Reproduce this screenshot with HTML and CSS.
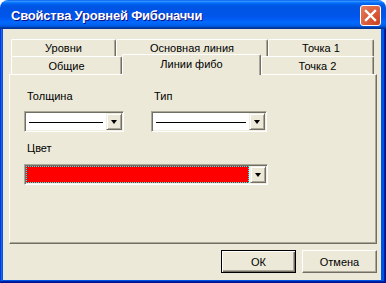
FILE: index.html
```html
<!DOCTYPE html>
<html lang="ru">
<head>
    <meta charset="UTF-8">
    <title>Свойства Уровней Фибоначчи</title>
    <link rel="stylesheet" href="styles.css">
</head>
<body>
    <div class="window">
        <div class="title-bar">
            <span class="title-text">Свойства Уровней Фибоначчи</span>
            <div class="close-btn">
                <svg width="21" height="21" viewBox="0 0 21 21">
                    <path d="M6 6 L15 15 M15 6 L6 15" stroke="#fff" stroke-width="2.4" stroke-linecap="square"/>
                </svg>
            </div>
        </div>
        <div class="frame">
            <div class="client">
                <div class="tab-strip">
                    <div class="tab-row">
                        <div class="tab" style="width: 105px">Уровни</div>
                        <div class="tab" style="width: 152px">Основная линия</div>
                        <div class="tab" style="width: 106px">Точка 1</div>
                    </div>
                    <div class="tab-row front">
                        <div class="tab" style="width: 111px">Общие</div>
                        <div class="tab selected" style="width: 139px">Линии фибо</div>
                        <div class="tab" style="width: 113px">Точка 2</div>
                    </div>
                </div>
                <div class="panel">
                    <div class="field-row">
                        <div class="field">
                            <div class="label">Толщина</div>
                            <div class="combo combo-thick">
                                <div class="combo-value"><span class="line-sample"></span></div>
                                <div class="combo-arrow"></div>
                            </div>
                        </div>
                        <div class="field">
                            <div class="label">Тип</div>
                            <div class="combo combo-type">
                                <div class="combo-value"><span class="line-sample"></span></div>
                                <div class="combo-arrow"></div>
                            </div>
                        </div>
                    </div>
                    <div class="field color-field">
                        <div class="label">Цвет</div>
                        <div class="combo combo-color">
                            <div class="combo-value color-value"></div>
                            <div class="combo-arrow"></div>
                        </div>
                    </div>
                </div>
                <div class="buttons">
                    <div class="btn default">ОК</div>
                    <div class="btn">Отмена</div>
                </div>
            </div>
        </div>
    </div>
</body>
</html>
```

FILE: styles.css
```css
/* Base */
html, body {
    margin: 0;
    padding: 0;
    background: #fff;
    font-family: "Liberation Sans", Arial, sans-serif;
    font-size: 11px;
    color: #000;
}

* {
    box-sizing: border-box;
}

.window {
    width: 386px;
    height: 283px;
    display: flex;
    flex-direction: column;
}

/* Title bar */
.title-bar {
    height: 29px;
    display: flex;
    align-items: center;
    justify-content: space-between;
    padding: 0 5px 0 11px;
    border-radius: 8px 8px 0 0;
    background: linear-gradient(to bottom, #0058ee 0%, #3593ff 4%, #288eff 6%, #127dff 8%, #036ffc 10%, #0262ee 14%, #0057e5 20%, #0054e3 24%, #0055eb 56%, #005bf5 66%, #026afe 76%, #0062ef 86%, #0052d6 92%, #0040ab 94%, #003092 100%);
}

.title-text {
    color: #fff;
    font-weight: bold;
    font-size: 13px;
    letter-spacing: -0.2px;
    text-shadow: 1px 1px #0f1089;
    margin-top: 1px;
}

.close-btn {
    width: 21px;
    height: 21px;
    border: 1px solid #fff;
    border-radius: 3px;
    background: radial-gradient(circle at 90% 90%, #cc4622 0%, #dc5e3d 55%, #e5815f 100%);
    display: flex;
    align-items: center;
    justify-content: center;
    margin-top: 2px;
}

.close-btn svg {
    display: block;
    margin: -1px;
}

/* Frame and client area */
.frame {
    flex: 1;
    display: flex;
    padding: 0 5px 3px 3px;
    background: #0054e3;
    box-shadow: inset -1px -1px #00138c, inset 1px 0 #0831d9, inset -2px -2px #001ea0, inset 2px 0 #166aee;
}

.client {
    flex: 1;
    background: #ece9d8;
    padding: 10px 4px 0 6px;
    display: flex;
    flex-direction: column;
}

/* Tabs */
.tab-strip {
    padding-left: 2px;
    height: 35px;
    display: flex;
    flex-direction: column;
}

.tab-row {
    display: flex;
    height: 17px;
    align-items: flex-end;
}

.tab-row.front {
    height: 18px;
}

.tab {
    height: 100%;
    display: flex;
    align-items: center;
    justify-content: center;
    border-top: 1px solid #fff;
    border-left: 1px solid #fff;
    border-right: 1px solid #716f64;
    border-radius: 2px 2px 0 0;
    box-shadow: inset -1px 0 #aca899;
    background: #ece9d8;
}

.tab.selected {
    height: 21px;
    margin-bottom: -1px;
    padding-bottom: 3px;
    position: relative;
    z-index: 1;
}

.panel {
    width: 368px;
    height: 170px;
    border-top: 1px solid #fff;
    border-left: 1px solid #fff;
    border-right: 1px solid #716f64;
    border-bottom: 1px solid #716f64;
    box-shadow: inset -1px -1px #aca899;
    padding: 15px 0 0 14px;
}

.field-row {
    display: flex;
    gap: 27px;
}

.label {
    height: 13px;
    line-height: 13px;
    margin-left: 3px;
    margin-bottom: 8px;
}

.color-field {
    margin-top: 10px;
}

.color-field .label {
    margin-bottom: 9px;
}

/* Combo boxes */
.combo {
    height: 21px;
    display: flex;
    background: #fff;
    border-top: 1px solid #aca899;
    border-left: 1px solid #aca899;
    border-right: 1px solid #fff;
    border-bottom: 1px solid #fff;
    box-shadow: inset 1px 1px #716f64, inset -1px -1px #f1efe2;
    padding: 1px;
}

.combo-thick { width: 100px; }
.combo-type { width: 116px; }
.combo-color { width: 244px; }

.combo-value {
    flex: 1;
    display: flex;
    align-items: center;
    padding: 0 3px;
}

.line-sample {
    flex: 1;
    height: 1px;
    background: #000;
    margin-top: 1px;
}

.color-value {
    background: #ff0000;
    outline: 1px dotted #00ffff;
    outline-offset: -1px;
    margin-right: 1px;
}

.combo-arrow {
    width: 16px;
    background: #ece9d8;
    border-top: 1px solid #f1efe2;
    border-left: 1px solid #f1efe2;
    border-right: 1px solid #716f64;
    border-bottom: 1px solid #716f64;
    box-shadow: inset 1px 1px #fff, inset -1px -1px #aca899;
    display: flex;
    align-items: center;
    justify-content: center;
}

.combo-arrow::after {
    content: "";
    border-left: 3.5px solid transparent;
    border-right: 3.5px solid transparent;
    border-top: 4px solid #000;
    margin-top: 1px;
}

/* Buttons */
.buttons {
    display: flex;
    justify-content: flex-end;
    gap: 6px;
    margin-top: 6px;
}

.btn {
    width: 75px;
    height: 23px;
    display: flex;
    align-items: center;
    justify-content: center;
    background: #ece9d8;
    border-top: 1px solid #fff;
    border-left: 1px solid #fff;
    border-right: 1px solid #716f64;
    border-bottom: 1px solid #716f64;
    box-shadow: inset -1px -1px #aca899;
}

.btn.default {
    border: 1px solid #000;
    box-shadow: inset 1px 1px #fff, inset -1px -1px #716f64, inset -2px -2px #aca899;
}
```
